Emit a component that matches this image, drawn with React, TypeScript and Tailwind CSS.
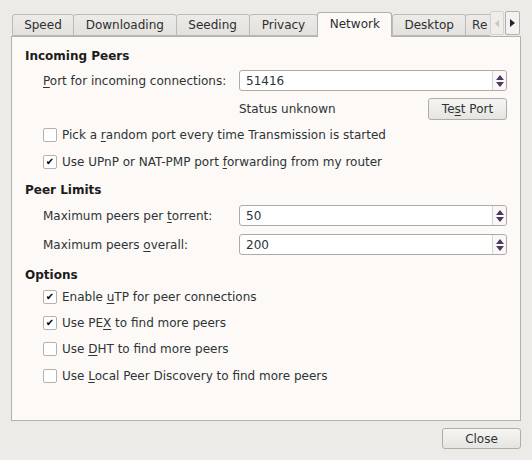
import React from "react";

const font = { fontFamily: '"DejaVu Sans", Verdana, sans-serif' };

const U = ({ children }: { children: React.ReactNode }) => (
  <span className="underline underline-offset-2">{children}</span>
);

const Check = ({ on }: { on?: boolean }) => (
  <div className="w-[14px] h-[14px] border border-[#b5b1ac] bg-white rounded-[2px] flex items-center justify-center shrink-0">
    {on && <span className="text-[10px] leading-none text-black font-bold">✔</span>}
  </div>
);

const CheckRow = ({ on, className, children }: { on?: boolean; className: string; children: React.ReactNode }) => (
  <div className={`flex items-center h-[20px] pl-[31px] gap-[5px] ${className}`}>
    <Check on={on} />
    <span>{children}</span>
  </div>
);

const Spin = ({ value }: { value: string }) => (
  <div className="w-[268px] h-[21px] flex border border-[#aeaaa5] rounded-[3px] bg-white">
    <div className="flex-1 flex items-center pl-[6px]">{value}</div>
    <div className="w-[14px] flex flex-col items-center justify-center gap-[2px] border-l border-[#d8d5d1] bg-[#f9f8f6] rounded-r-[3px]">
      <svg width="8" height="5" viewBox="0 0 8 5"><path d="M0 5 L4 0 L8 5 Z" fill="#4a3b5c" /></svg>
      <svg width="8" height="5" viewBox="0 0 8 5"><path d="M0 0 L4 5 L8 0 Z" fill="#4a3b5c" /></svg>
    </div>
  </div>
);

const FieldRow = ({ label, value, className }: { label: React.ReactNode; value: string; className: string }) => (
  <div className={`flex items-center h-[21px] pl-[31px] ${className}`}>
    <div className="w-[196px] shrink-0">{label}</div>
    <Spin value={value} />
  </div>
);

const Tab = ({ label, w, active }: { label: string; w: number; active?: boolean }) =>
  active ? (
    <div
      className="h-[25px] flex items-center justify-center pb-[2px] border border-b-0 border-[#b4b0ab] rounded-t-[3px] bg-[#fcf9f6] -mb-[1px] relative z-10 text-[#2e2e2e]"
      style={{ width: w }}
    >
      {label}
    </div>
  ) : (
    <div
      className="h-[22px] flex items-center justify-center border border-[#bdb9b4] rounded-t-[3px] bg-gradient-to-b from-[#ecebe8] to-[#e3e1dd] text-[#2e2e2e] -mr-[1px]"
      style={{ width: w }}
    >
      {label}
    </div>
  );

export default function App() {
  return (
    <div className="w-[532px] h-[460px] bg-[#edebe7] text-[12px] text-[#2e3436] flex flex-col" style={font}>
      <div className="flex items-end h-[36px] pl-[12px] pr-[12px]">
        <Tab label="Speed" w={62} />
        <Tab label="Downloading" w={104} />
        <Tab label="Seeding" w={74} />
        <Tab label="Privacy" w={70} />
        <Tab label="Network" w={75} active />
        <Tab label="Desktop" w={74} />
        <div className="h-[22px] w-[25px] overflow-hidden border border-[#bdb9b4] border-r-0 rounded-tl-[3px] bg-gradient-to-b from-[#ecebe8] to-[#e3e1dd] pl-[6px] flex items-center">
          Re
        </div>
        <div className="h-[24px] w-[14px] flex items-center justify-center bg-[#efedea] border border-[#d6d3cf] rounded-[2px] mb-[1px]">
          <svg width="4" height="7" viewBox="0 0 4 7"><path d="M4 0 L0 3.5 L4 7 Z" fill="#c8c4c0" /></svg>
        </div>
        <div className="h-[24px] w-[15px] ml-[1px] flex items-center justify-center bg-[#f4f2ef] border border-[#b4b0ab] rounded-[2px] mb-[1px]">
          <svg width="5" height="8" viewBox="0 0 5 8"><path d="M0 0 L5 4 L0 8 Z" fill="#2a1f33" /></svg>
        </div>
      </div>
      <div className="mx-[11px] w-[510px] h-[385px] bg-[#fcf9f6] border border-[#b4b0ab] flex flex-col">
        <div className="flex items-center h-[20px] mt-[9px] pl-[13px] font-bold text-[#1c1c1c]">Incoming Peers</div>
        <FieldRow className="mt-[4px]" label={<><U>P</U>ort for incoming connections:</>} value="51416" />
        <div className="flex items-center h-[22px] mt-[7px] pl-[227px]">
          <span className="flex-1">Status unknown</span>
          <button className="w-[79px] h-[22px] mr-[13px] border border-[#b0aca7] rounded-[3px] bg-gradient-to-b from-[#f6f5f3] to-[#e6e4e0] text-[#2e3436]">
            Te<U>s</U>t Port
          </button>
        </div>
        <CheckRow className="mt-[5px]">
          Pick a <U>r</U>andom port every time Transmission is started
        </CheckRow>
        <CheckRow on className="mt-[7px]">
          Use UPnP or NAT-PMP port <U>f</U>orwarding from my router
        </CheckRow>
        <div className="flex items-center h-[20px] mt-[8px] pl-[13px] font-bold text-[#1c1c1c]">Peer Limits</div>
        <FieldRow className="mt-[5px]" label={<>Maximum peers per <U>t</U>orrent:</>} value="50" />
        <FieldRow className="mt-[8px]" label={<>Maximum peers <U>o</U>verall:</>} value="200" />
        <div className="flex items-center h-[20px] mt-[10px] pl-[13px] font-bold text-[#1c1c1c]">Options</div>
        <CheckRow on className="mt-[2px]">
          Enable <U>u</U>TP for peer connections
        </CheckRow>
        <CheckRow on className="mt-[6px]">
          Use PE<U>X</U> to find more peers
        </CheckRow>
        <CheckRow className="mt-[6px]">
          Use <U>D</U>HT to find more peers
        </CheckRow>
        <CheckRow className="mt-[7px]">
          Use <U>L</U>ocal Peer Discovery to find more peers
        </CheckRow>
      </div>
      <div className="flex justify-end pr-[11px] mt-[7px]">
        <button className="w-[79px] h-[21px] border border-[#b0aca7] rounded-[3px] bg-gradient-to-b from-[#f6f5f3] to-[#e6e4e0] text-[#2e3436]">
          Close
        </button>
      </div>
    </div>
  );
}
